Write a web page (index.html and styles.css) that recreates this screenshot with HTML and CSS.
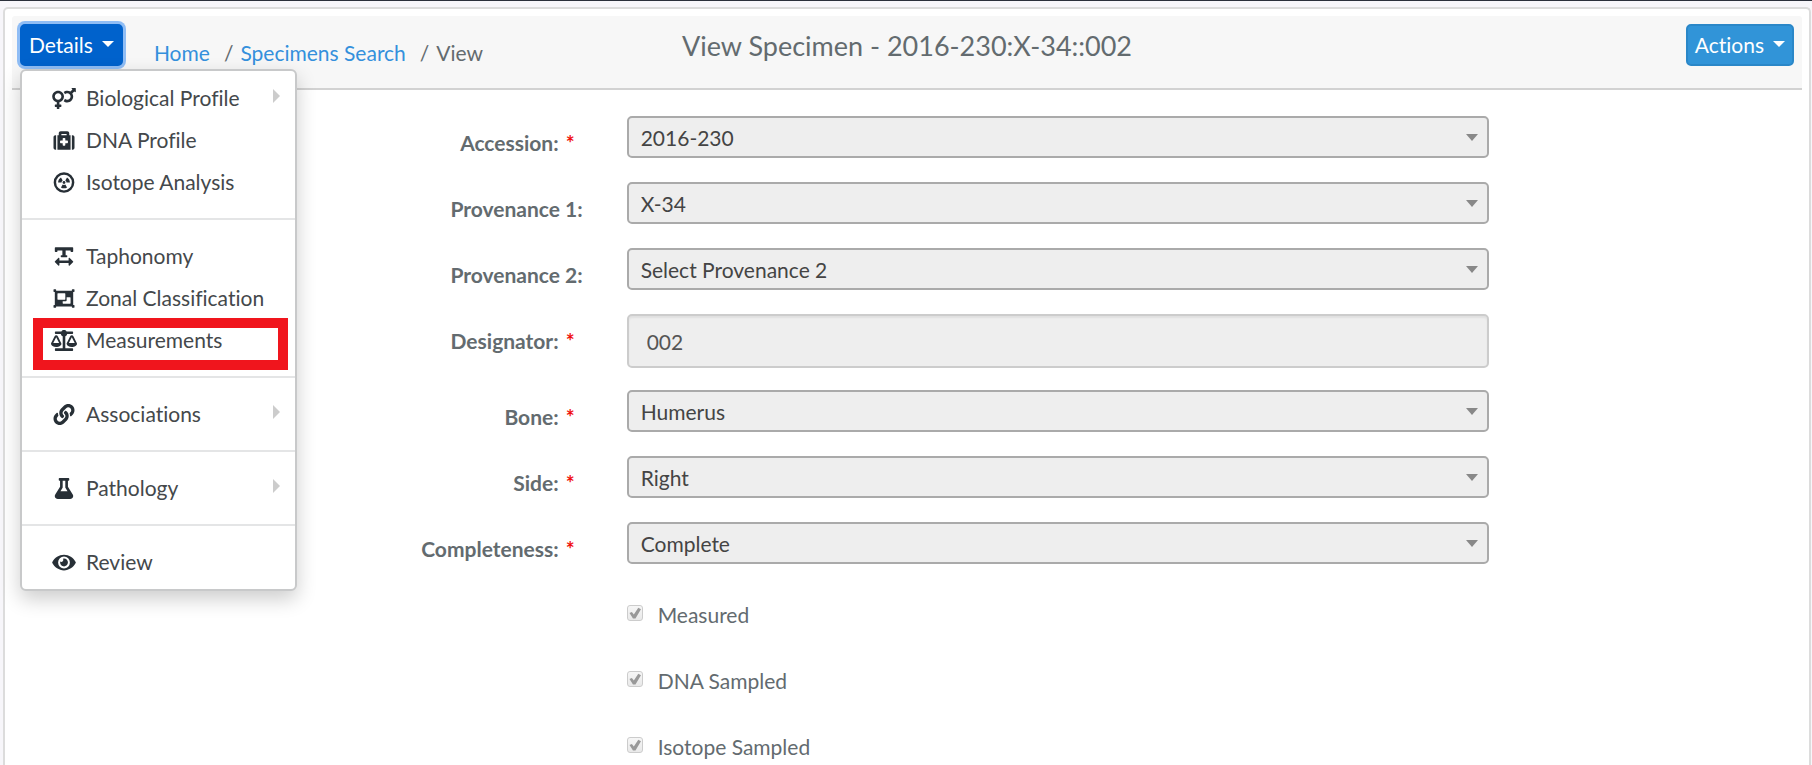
FILE: index.html
```html
<!DOCTYPE html>
<html lang="en">
<head>
<meta charset="utf-8">
<title>View Specimen</title>
<meta name="viewport" content="width=device-width, initial-scale=1">
<link rel="stylesheet" href="styles.css">
</head>
<body>
<main class="panel">
  <header class="panel-header">
    <div class="header-left">
      <div class="dropdown">
        <button type="button" class="btn btn-details" aria-expanded="true">Details<span class="caret"></span></button>
        <nav class="menu" aria-label="Details">
          <a class="menu-item" href="#"><svg class="icon" viewBox="0 0 576 512"><path d="M564 0h-79c-10.7 0-16 12.9-8.5 20.5l16.9 16.9-48.7 48.7C422.5 72.1 396.2 64 368 64c-33.7 0-64.6 11.6-89.2 30.9 14 16.7 25 36 32.1 57.1 14.5-14.8 34.7-24 57.1-24 44.1 0 80 35.9 80 80s-35.9 80-80 80c-22.3 0-42.6-9.2-57.1-24-7.1 21.1-18 40.4-32.1 57.1 24.5 19.4 55.5 30.9 89.2 30.9 79.5 0 144-64.5 144-144 0-28.2-8.1-54.5-22.1-76.7l48.7-48.7 16.9 16.9c2.4 2.4 5.5 3.5 8.4 3.5 6.2 0 12.1-4.8 12.1-12V12c0-6.600-5.400-12-12-12zM144 64C64.500 64 0 128.500 0 208c0 68.500 47.900 125.900 112 140.400V400H76c-6.600 0-12 5.400-12 12v40c0 6.600 5.400 12 12 12h36v36c0 6.600 5.400 12 12 12h40c6.600 0 12-5.400 12-12v-36h36c6.600 0 12-5.400 12-12v-40c0-6.600-5.400-12-12-12h-36v-51.600c64.100-14.600 112-71.900 112-140.400 0-79.500-64.500-144-144-144zm0 224c-44.100 0-80-35.900-80-80s35.900-80 80-80 80 35.900 80 80-35.900 80-80 80z"/></svg>Biological Profile<span class="submenu-arrow"></span></a>
          <a class="menu-item" href="#"><svg class="icon" viewBox="0 0 512 512"><path fill-rule="evenodd" d="M96 480h320V128h-32V80c0-26.500-21.500-48-48-48H176c-26.500 0-48 21.500-48 48v48H96v352zm96-384h128v32H192V96zm320 80v256c0 26.500-21.500 48-48 48h-16V128h16c26.500 0 48 21.500 48 48zM64 480H48c-26.500 0-48-21.500-48-48V176c0-26.500 21.500-48 48-48h16v352zm288-208v32c0 8.800-7.200 16-16 16h-48v48c0 8.800-7.200 16-16 16h-32c-8.800 0-16-7.200-16-16v-48h-48c-8.800 0-16-7.200-16-16v-32c0-8.800 7.200-16 16-16h48v-48c0-8.800 7.200-16 16-16h32c8.800 0 16 7.200 16 16v48h48c8.800 0 16 7.200 16 16z"/></svg>DNA Profile</a>
          <a class="menu-item" href="#"><svg class="icon" viewBox="0 0 512 512"><circle cx="256" cy="256" r="222" fill="none" stroke="currentColor" stroke-width="60"/><circle cx="256" cy="256" r="34"/><path d="M196 256H112c0-52 27-96 70-121l42 71c-17 11-28 29-28 50zM316 256h84c0-52-27-96-70-121l-42 71c17 11 28 29 28 50zM224 306l-42 71c44 28 104 28 148 0l-42-71c-20 13-44 13-64 0z"/></svg>Isotope Analysis</a>
          <hr class="menu-divider">
          <a class="menu-item" href="#"><svg class="icon" viewBox="0 0 448 512"><path d="M432 32H16A16 16 0 0 0 0 48v80a16 16 0 0 0 16 16h32a16 16 0 0 0 16-16v-16h120v112h-24a16 16 0 0 0-16 16v16a16 16 0 0 0 16 16h128a16 16 0 0 0 16-16v-16a16 16 0 0 0-16-16h-24V112h120v16a16 16 0 0 0 16 16h32a16 16 0 0 0 16-16V48a16 16 0 0 0-16-16zm-68.690 260.690C354 283.360 336 288.360 336 304v48H112v-48c0-14.310-17.310-21.320-27.310-11.310l-80 80a16 16 0 0 0 0 22.620l80 80C94 484.640 112 479.640 112 464v-48h224v48c0 14.310 17.310 21.330 27.310 11.310l80-80a16 16 0 0 0 0-22.620z"/></svg>Taphonomy</a>
          <a class="menu-item" href="#"><svg class="icon" viewBox="0 0 512 512"><path d="M480 128V96h20c6.600 0 12-5.400 12-12V44c0-6.600-5.400-12-12-12h-40c-6.600 0-12 5.400-12 12v20H64V44c0-6.600-5.400-12-12-12H12C5.400 32 0 37.400 0 44v40c0 6.600 5.400 12 12 12h20v320H12c-6.600 0-12 5.400-12 12v40c0 6.600 5.400 12 12 12h40c6.600 0 12-5.400 12-12v-20h384v20c0 6.600 5.400 12 12 12h40c6.600 0 12-5.400 12-12v-40c0-6.600-5.400-12-12-12h-20V128zM96 276V140c0-6.600 5.400-12 12-12h168c6.600 0 12 5.400 12 12v136c0 6.600-5.400 12-12 12H108c-6.600 0-12-5.400-12-12zm320 96c0 6.600-5.400 12-12 12H236c-6.600 0-12-5.400-12-12v-52h72c13.300 0 24-10.700 24-24v-72h84c6.600 0 12 5.400 12 12v136z"/></svg>Zonal Classification</a>
          <a class="menu-item highlighted" href="#"><svg class="icon" viewBox="0 0 640 512"><path d="M256 336h-.020c0-16.180 1.340-8.730-85.050-181.510-17.650-35.290-68.190-35.360-85.870 0C-2.060 328.750.020 320.330.020 336H0c0 44.180 57.310 80 128 80s128-35.820 128-80zM128 176l72 144H56l72-144zm511.980 160c0-16.180 1.340-8.730-85.050-181.510-17.650-35.290-68.190-35.360-85.870 0-87.120 174.260-85.040 165.840-85.040 181.510H384c0 44.180 57.310 80 128 80s128-35.820 128-80h-.020zM440 320l72-144 72 144H440zm88 128H352V153.250c23.510-10.290 41.160-31.480 46.390-57.250H528c8.840 0 16-7.160 16-16V48c0-8.840-7.160-16-16-16H383.640C369.040 12.680 346.090 0 320 0s-49.040 12.680-63.640 32H112c-8.840 0-16 7.160-16 16v32c0 8.840 7.160 16 16 16h129.610c5.230 25.760 22.870 46.960 46.390 57.250V448H112c-8.840 0-16 7.160-16 16v32c0 8.840 7.160 16 16 16h416c8.840 0 16-7.160 16-16v-32c0-8.840-7.160-16-16-16z"/></svg>Measurements</a>
          <hr class="menu-divider">
          <a class="menu-item" href="#"><svg class="icon" viewBox="0 0 512 512"><path d="M326.612 185.391c59.747 59.809 58.927 155.698.36 214.590-.110.120-.240.250-.360.370l-67.200 67.200c-59.270 59.270-155.699 59.262-214.960 0-59.270-59.260-59.270-155.700 0-214.960l37.106-37.106c9.840-9.840 26.786-3.300 27.294 10.606.648 17.722 3.826 35.527 9.690 52.721 1.986 5.822.567 12.262-3.783 16.612l-13.087 13.087c-28.026 28.026-28.905 73.660-1.155 101.960 28.024 28.579 74.086 28.749 102.325.510l67.200-67.190c28.191-28.191 28.073-73.757 0-101.830-3.701-3.694-7.429-6.564-10.341-8.569a16.037 16.037 0 0 1-6.947-12.606c-.396-10.567 3.348-21.456 11.698-29.806l21.054-21.055c5.521-5.521 14.182-6.199 20.584-1.731a152.482 152.482 0 0 1 20.522 17.197zM467.547 44.449c-59.261-59.262-155.690-59.270-214.960 0l-67.200 67.200c-.120.120-.250.250-.360.370-58.566 58.892-59.387 154.781.360 214.590a152.454 152.454 0 0 0 20.521 17.196c6.402 4.468 15.064 3.789 20.584-1.731l21.054-21.055c8.350-8.350 12.094-19.239 11.698-29.806a16.037 16.037 0 0 0-6.947-12.606c-2.912-2.005-6.640-4.875-10.341-8.569-28.073-28.073-28.191-73.639 0-101.830l67.200-67.190c28.239-28.239 74.300-28.069 102.325.510 27.750 28.300 26.872 73.934-1.155 101.960l-13.087 13.087c-4.350 4.350-5.769 10.790-3.783 16.612 5.864 17.194 9.042 34.999 9.690 52.721.509 13.906 17.454 20.446 27.294 10.606l37.106-37.106c59.271-59.259 59.271-155.699.001-214.959z"/></svg>Associations<span class="submenu-arrow"></span></a>
          <hr class="menu-divider">
          <a class="menu-item" href="#"><svg class="icon" viewBox="0 0 448 512"><path d="M437.200 403.500L320 215V64h8c13.300 0 24-10.700 24-24V24c0-13.300-10.700-24-24-24H120c-13.300 0-24 10.700-24 24v16c0 13.300 10.700 24 24 24h8v151L10.800 403.500C-18.500 450.600 15.300 512 70.900 512h306.200c55.700 0 89.400-61.500 60.100-108.500zM137.900 320l48.200-77.600c3.700-5.200 5.800-11.600 5.800-18.400V64h64v160c0 6.900 2.200 13.200 5.800 18.400l48.200 77.600h-172z"/></svg>Pathology<span class="submenu-arrow"></span></a>
          <hr class="menu-divider">
          <a class="menu-item" href="#"><svg class="icon" viewBox="0 0 576 512"><path d="M572.520 241.400C518.290 135.590 410.930 64 288 64S57.680 135.640 3.480 241.410a32.350 32.350 0 0 0 0 29.190C57.710 376.410 165.070 448 288 448s230.320-71.640 284.520-177.410a32.350 32.350 0 0 0 0-29.190zM288 400a144 144 0 1 1 144-144 143.930 143.930 0 0 1-144 144zm0-240a95.310 95.310 0 0 0-25.310 3.790 47.850 47.850 0 0 1-66.900 66.900A95.780 95.780 0 1 0 288 160z"/></svg>Review</a>
        </nav>
      </div>
      <ol class="breadcrumb">
        <li><a href="#">Home</a></li>
        <li><a href="#">Specimens Search</a></li>
        <li>View</li>
      </ol>
    </div>
    <h1 class="title">View Specimen - 2016-230:X-34::002</h1>
    <button type="button" class="btn btn-actions">Actions<span class="caret"></span></button>
  </header>

  <form class="form">
    <div class="row">
      <label class="label" for="accession">Accession: <span class="required">*</span></label>
      <div class="select"><select id="accession" disabled><option>2016-230</option></select></div>
    </div>
    <div class="row">
      <label class="label" for="provenance1">Provenance 1:</label>
      <div class="select"><select id="provenance1" disabled><option>X-34</option></select></div>
    </div>
    <div class="row">
      <label class="label" for="provenance2">Provenance 2:</label>
      <div class="select"><select id="provenance2" disabled><option>Select Provenance 2</option></select></div>
    </div>
    <div class="row">
      <label class="label" for="designator">Designator: <span class="required">*</span></label>
      <input class="text-input" id="designator" type="text" value="002" disabled>
    </div>
    <div class="row">
      <label class="label" for="bone">Bone: <span class="required">*</span></label>
      <div class="select"><select id="bone" disabled><option>Humerus</option></select></div>
    </div>
    <div class="row">
      <label class="label" for="side">Side: <span class="required">*</span></label>
      <div class="select"><select id="side" disabled><option>Right</option></select></div>
    </div>
    <div class="row">
      <label class="label" for="completeness">Completeness: <span class="required">*</span></label>
      <div class="select"><select id="completeness" disabled><option>Complete</option></select></div>
    </div>
    <div class="row">
      <label class="check"><input type="checkbox" checked disabled><span>Measured</span></label>
    </div>
    <div class="row">
      <label class="check"><input type="checkbox" checked disabled><span>DNA Sampled</span></label>
    </div>
    <div class="row">
      <label class="check"><input type="checkbox" checked disabled><span>Isotope Sampled</span></label>
    </div>
  </form>
</main>
</body>
</html>
```

FILE: styles.css
```css
* {
  box-sizing: border-box;
}

body {
  margin: 0;
  min-height: 100vh;
  display: flex;
  flex-direction: column;
  border-top: 1px solid #2b303b;
  background: #f7f6fa;
  color: #636b6f;
  font: 21px/30px Lato, "Open Sans", sans-serif;
  font-variant-ligatures: none;
}

a {
  color: #3490dc;
  text-decoration: none;
}

.panel {
  flex: 1;
  margin: 6px 1px 0 3px;
  padding: 7px 7px 0;
  border: 2px solid #dcdcdc;
  border-bottom: 0;
  border-radius: 5px 5px 0 0;
  background: #fff;
}

.panel-header {
  display: grid;
  grid-template-columns: 1fr auto 1fr;
  align-items: start;
  padding: 8px 8px 20px;
  border-bottom: 2px solid #d2d2d2;
  border-radius: 3px 3px 0 0;
  background: #f7f7f7;
}

.header-left {
  display: flex;
  align-items: flex-start;
  gap: 31px;
}

.dropdown {
  position: relative;
}

.btn {
  display: flex;
  align-items: center;
  gap: 9px;
  height: 42px;
  padding: 0 7px;
  border: 2px solid;
  border-radius: 5px;
  color: #fff;
  font: inherit;
}

.btn-details {
  border-color: #0062cc;
  background: #0062cc;
  box-shadow: 0 0 0 3px #8fbdf5;
}

.btn-actions {
  justify-self: end;
  border-color: #2a87c8;
  background: #3194d8;
}

.caret {
  margin-bottom: 3px;
  border: 6px solid transparent;
  border-top-color: #fff;
  border-bottom: 0;
}

.breadcrumb {
  display: flex;
  margin: 0;
  padding: 14px 0 0;
  list-style: none;
}

.breadcrumb li + li::before {
  content: "/";
  padding: 0 7px 0 14px;
}

.title {
  margin: 0;
  padding-top: 6px;
  font-size: 27px;
  font-weight: 400;
  line-height: 32px;
}

.menu {
  position: absolute;
  z-index: 1;
  top: 45px;
  left: 0;
  width: 277px;
  padding: 6px 0;
  border: 2px solid #c8c9ca;
  border-radius: 6px;
  background: #fff;
  box-shadow: 0 8px 20px rgba(0, 0, 0, 0.2);
}

.menu-item {
  position: relative;
  display: flex;
  align-items: center;
  gap: 9px;
  height: 42px;
  padding: 0 15px 0 29px;
  color: #44484b;
  white-space: nowrap;
}

.icon {
  flex: none;
  width: 26px;
  height: 21px;
  fill: currentColor;
  color: #272f36;
}

.submenu-arrow {
  margin: 0 0 4px auto;
  border: 7px solid transparent;
  border-left-color: #ccc;
  border-right: 0;
}

.menu-divider {
  height: 2px;
  margin: 15px 0;
  border: 0;
  background: #e4e5e6;
}

.highlighted::before {
  content: "";
  position: absolute;
  inset: -1px 7px -9px 11px;
  border: 10px solid #f0151d;
}

.form {
  display: grid;
  gap: 22px;
  padding: 26px 1px 0 5px;
}

.row {
  display: grid;
  grid-template-columns: 4fr 6fr 2fr;
  align-items: start;
  min-height: 44px;
}

.label {
  padding: 12px 29px 0 0;
  font-weight: 700;
  text-align: right;
}

.required {
  margin: 0 8px 0 2px;
  color: #f00f0f;
}

.select {
  position: relative;
  margin: 0 15px;
}

.select::after {
  content: "";
  position: absolute;
  top: 18px;
  right: 11px;
  border: 6px solid transparent;
  border-top: 7px solid #888;
  border-bottom: 0;
}

.select select {
  display: block;
  appearance: none;
  width: 100%;
  height: 42px;
  padding: 2px 12px 0;
  border: 2px solid #aaa;
  border-radius: 5px;
  background: #eee;
  color: #444;
  font: inherit;
  opacity: 1;
}

.text-input {
  height: 54px;
  margin: 0 15px;
  padding: 0 18px;
  border: 2px solid #ccc;
  border-radius: 5px;
  background: #eee;
  box-shadow: inset 0 2px 2px rgba(0, 0, 0, 0.06);
  color: #555;
  font: inherit;
}

.check {
  grid-column: 2;
  display: flex;
  align-items: flex-start;
  gap: 15px;
  margin-left: 15px;
  padding-top: 12px;
}

.check input {
  appearance: none;
  width: 16px;
  height: 16px;
  margin: 5px 0 0;
  border: 1px solid #ccc;
  border-radius: 3px;
  background: linear-gradient(#f6f6f6, #e9e9e9);
}

.check input::after {
  content: "";
  display: block;
  height: 14px;
  background: #999;
  clip-path: polygon(13% 50%, 30% 42%, 44% 60%, 76% 12%, 95% 24%, 56% 90%, 38% 90%);
}
```
